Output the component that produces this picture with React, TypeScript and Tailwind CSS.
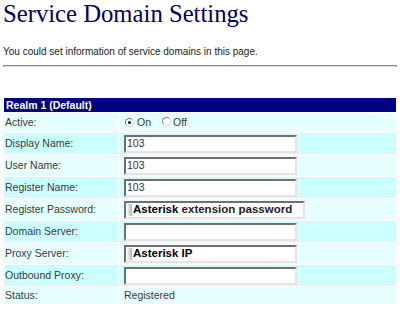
import React from "react";

// Service Domain Settings page, realm 1 form
const rows: { label: string; kind: "input" | "password" | "proxy"; value?: string }[] = [
  { label: "Display Name:", kind: "input", value: "103" },
  { label: "User Name:", kind: "input", value: "103" },
  { label: "Register Name:", kind: "input", value: "103" },
  { label: "Register Password:", kind: "password" },
  { label: "Domain Server:", kind: "input", value: "" },
  { label: "Proxy Server:", kind: "proxy" },
  { label: "Outbound Proxy:", kind: "input", value: "" },
];

function Radio({ checked }: { checked?: boolean }) {
  return (
    <span className="inline-flex h-[9px] w-[9px] items-center justify-center rounded-full border border-[#808080] border-b-[#d8d8d8] border-r-[#d8d8d8] bg-white">
      {checked && <span className="h-[3px] w-[3px] rounded-full bg-black" />}
    </span>
  );
}

function TextBox({ value, wide, children }: { value?: string; wide?: boolean; children?: React.ReactNode }) {
  return (
    <div
      className={
        "flex h-[18px] items-center border-2 border-[#6f6f6f] border-b-[#e4e4e4] border-r-[#e4e4e4] bg-white pl-[1px] text-[10.5px] text-[#333] " +
        (wide ? "w-[181px]" : "w-[173px]")
      }
    >
      {children ?? value}
    </div>
  );
}

function Overlay({ children }: { children: React.ReactNode }) {
  return (
    <span className="flex h-full items-center">
      <span className="mr-[1px] h-[12px] w-[5px] bg-gradient-to-r from-[#f8f8f8] to-[#b4b4b4]" />
      <span className="text-[11.5px] font-bold text-black">{children}</span>
    </span>
  );
}

export default function App() {
  return (
    <div className="h-[312px] w-[400px] overflow-hidden bg-white font-['Liberation_Sans',Arial,sans-serif]">
      <h1 className="pl-[3px] font-['Liberation_Serif','Times_New_Roman',serif] text-[24.7px] leading-[28px] text-[#000066]">
        Service Domain Settings
      </h1>
      <p className="mt-[18px] pl-[3px] text-[10px] leading-[12px] text-[#222]">
        You could set information of service domains in this page.
      </p>
      <div className="mx-[3px] mt-[7px] h-[2px] border-t border-b border-t-[#8a8a8a] border-b-[#dcdcdc]" />

      <div className="ml-[4px] mt-[31px] w-[392px]">
        <div className="h-[14px] bg-[#000080] pl-[2px] text-[10.5px] font-bold leading-[14px] text-white">
          Realm 1 (Default)
        </div>
        <div className="mt-[1px] grid grid-cols-[114px_276px] gap-x-[2px] gap-y-[1px] text-[10.5px] text-[#3a3a3a]">
          <div className="flex h-[19px] items-center bg-[#e6ffff] pl-[1px]">Active:</div>
          <div className="flex h-[19px] items-center bg-[#e6ffff] pl-[5px]">
            <Radio checked />
            <span className="ml-[3px]">On</span>
            <span className="ml-[11px]">
              <Radio />
            </span>
            <span className="ml-[2px]">Off</span>
          </div>

          {rows.map((r, i) => {
            const bg = i % 2 === 0 ? "bg-[#ccffff]" : "bg-[#e6ffff]";
            return (
              <React.Fragment key={r.label}>
                <div className={"flex h-[21px] items-center pl-[1px] " + bg}>{r.label}</div>
                <div className={"flex h-[21px] items-center pl-[4px] " + bg}>
                  {r.kind === "input" && <TextBox value={r.value} />}
                  {r.kind === "password" && (
                    <TextBox wide>
                      <Overlay>
                        Asterisk <span className="text-[#222]">extension password</span>
                      </Overlay>
                    </TextBox>
                  )}
                  {r.kind === "proxy" && (
                    <TextBox>
                      <Overlay>Asterisk IP</Overlay>
                    </TextBox>
                  )}
                </div>
              </React.Fragment>
            );
          })}

          <div className="flex h-[17px] items-center bg-[#e6ffff] pl-[1px]">Status:</div>
          <div className="flex h-[17px] items-center bg-[#e6ffff] pl-[4px]">Registered</div>
        </div>
      </div>
    </div>
  );
}
